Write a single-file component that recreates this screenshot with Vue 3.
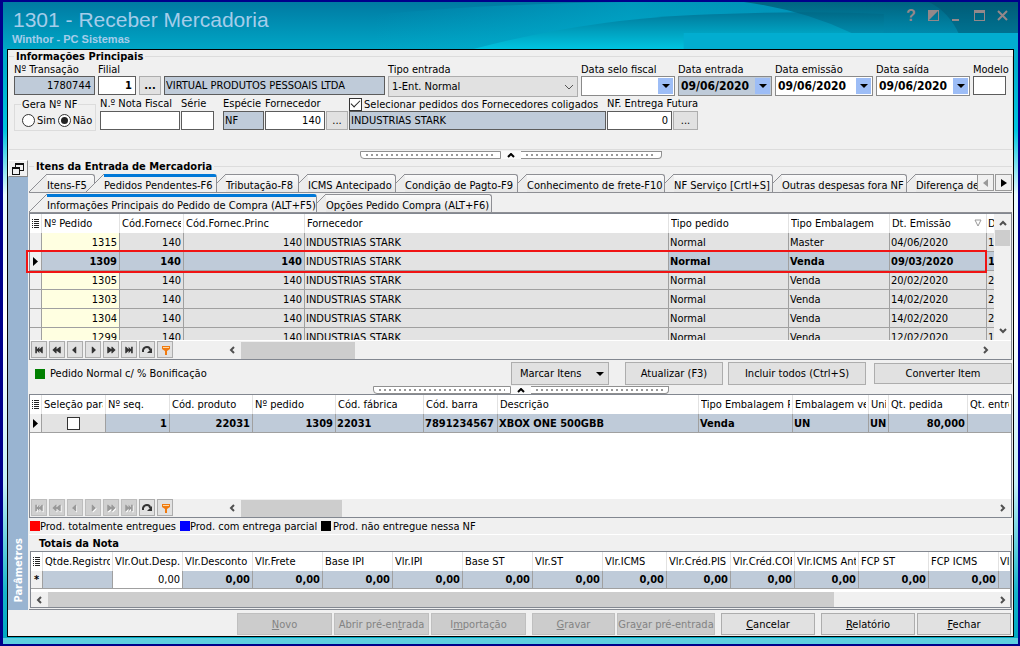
<script setup>
import { ref } from 'vue'

const navGlyphs = [
  { name: 'Primeiro', d: 'M1 2h2v3l3-3v3l3-3h1v8h-1l-3-3v3l-3-3v3h-2z' },
  { name: 'Página anterior', d: 'M5 2v3l4-3h1v8h-1l-4-3v3h-1l-4-4l4-4z' },
  { name: 'Anterior', d: 'M7 2v8h-1l-4-4l4-4z' },
  { name: 'Próximo', d: 'M4 2v8h1l4-4l-4-4z' },
  { name: 'Próxima página', d: 'M6 2v3l-4-3h-1v8h1l4-3v3h1l4-4l-4-4z' },
  { name: 'Último', d: 'M10 2h-2v3l-3-3v3l-3-3h-1v8h1l3-3v3l3-3v3h2z' },
]

const mainTabs = [
  'Itens-F5',
  'Pedidos Pendentes-F6',
  'Tributação-F8',
  'ICMS Antecipado',
  'Condição de Pagto-F9',
  'Conhecimento de frete-F10',
  'NF Serviço [Crtl+S]',
  'Outras despesas fora NF',
  'Diferença de ICMS',
]
const subTabs = ['Informações Principais do Pedido de Compra (ALT+F5)', 'Opções Pedido Compra (ALT+F6)']
const activeMain = ref(1)
const activeSub = ref(0)

const orderColumns = ['Nº Pedido', 'Cód.Fornecedor', 'Cód.Fornec.Princ', 'Fornecedor', 'Tipo pedido', 'Tipo Embalagem']
const orders = [
  { id: '1315', pack: 'Master', date: '04/06/2020', d: '1' },
  { id: '1309', pack: 'Venda', date: '09/03/2020', d: '1', selected: true },
  { id: '1305', pack: 'Venda', date: '20/02/2020', d: '2' },
  { id: '1303', pack: 'Venda', date: '14/02/2020', d: '2' },
  { id: '1304', pack: 'Venda', date: '14/02/2020', d: '2' },
  { id: '1299', pack: 'Venda', date: '12/02/2020', d: '1' },
]

const productColumns = [
  'Seleção para NF', 'Nº seq.', 'Cód. produto', 'Nº pedido', 'Cód. fábrica', 'Cód. barra', 'Descrição',
  'Tipo Embalagem Pedido', 'Embalagem venda', 'Uni', 'Qt. pedida', 'Qt. entregue',
]

const totals = [
  'Vlr.Desconto', 'Vlr.Frete', 'Base IPI', 'Vlr.IPI', 'Base ST', 'Vlr.ST', 'Vlr.ICMS',
  'Vlr.Créd.PIS', 'Vlr.Créd.COFINS', 'Vlr.ICMS Antecip.', 'FCP ST', 'FCP ICMS',
]

const linked = ref(true)
const generate = ref('nao')
const entryType = ref('1-Ent. Normal')
</script>

<template>
  <div class="window">
    <header class="title-bar">
      <svg class="waves" viewBox="0 0 1014 47" preserveAspectRatio="none" aria-hidden="true">
        <defs>
          <linearGradient id="base" x1="0" y1="0" x2="0" y2="1">
            <stop offset="0" stop-color="#007aa2" />
            <stop offset="1" stop-color="#00a6c6" />
          </linearGradient>
          <linearGradient id="glow" x1="0" y1="0" x2="1" y2="0">
            <stop offset="0" stop-color="#00b0d0" stop-opacity="0" />
            <stop offset=".4" stop-color="#00b0d0" stop-opacity=".55" />
            <stop offset="1" stop-color="#0090b8" stop-opacity=".6" />
          </linearGradient>
          <linearGradient id="deep" x1="0" y1="0" x2="0" y2="1">
            <stop offset="0" stop-color="#00789a" />
            <stop offset="1" stop-color="#00c4e0" />
          </linearGradient>
          <linearGradient id="dark" x1="0" y1="0" x2="0" y2="1">
            <stop offset="0" stop-color="#00566f" />
            <stop offset="1" stop-color="#0086a8" />
          </linearGradient>
        </defs>
        <rect width="1014" height="47" fill="url(#base)" />
        <path d="M370 13Q480 2 620 0H1014V47H370z" fill="url(#glow)" />
        <path d="M470 47Q580 18 690 13T880 12V47z" fill="url(#deep)" />
        <path d="M740 0Q800 8 850 32H1014V0z" fill="url(#dark)" opacity=".75" />
        <path d="M925 0Q945 10 955 32H1014V0z" fill="#00506a" opacity=".4" />
        <path d="M680 31H1014V47H680z" fill="#02add0" />
      </svg>
      <div class="titles">
        <h1>1301 - Receber Mercadoria</h1>
        <p>Winthor - PC Sistemas</p>
      </div>
      <div class="window-buttons">
        <button type="button" class="help" aria-label="Ajuda">?</button>
        <button type="button" aria-label="Tema">
          <svg width="12" height="12" viewBox="0 0 12 12"><path d="M0 0h11v11H0zM1 10h9V1z" fill="currentColor" fill-rule="evenodd" /></svg>
        </button>
        <button type="button" aria-label="Minimizar">
          <svg width="12" height="12" viewBox="0 0 12 12"><path d="M1 9h7v2H1z" fill="currentColor" /></svg>
        </button>
        <button type="button" aria-label="Maximizar">
          <svg width="12" height="12" viewBox="0 0 12 12"><path d="M0 0h11v11H0zM1 3v7h9V3z" fill="currentColor" fill-rule="evenodd" /></svg>
        </button>
        <button type="button" aria-label="Fechar janela">
          <svg width="12" height="12" viewBox="0 0 12 12"><path d="M1 1l9 9M10 1L1 10" stroke="currentColor" stroke-width="2" /></svg>
        </button>
      </div>
    </header>

    <main class="client">
      <fieldset class="info">
        <legend>Informações Principais</legend>
        <div class="row first">
          <div class="field"><label for="tr">Nº Transação</label><input id="tr" class="num shade" value="1780744" readonly></div>
          <div class="field"><label for="fi">Filial</label><input id="fi" class="num bold" value="1"></div>
          <div class="field"><button type="button" class="dots bold" aria-label="Buscar filial">...</button></div>
          <div class="field"><input class="shade tight" aria-label="Nome da filial" value="VIRTUAL PRODUTOS PESSOAIS LTDA" readonly></div>
          <div class="field">
            <label for="te">Tipo entrada</label>
            <div class="select">
              <select id="te" v-model="entryType"><option>1-Ent. Normal</option></select>
              <svg width="10" height="6" viewBox="0 0 10 6"><path d="M1 1l4 4l4-4" fill="none" stroke="#555" stroke-width="1" /></svg>
            </div>
          </div>
          <div class="field"><label for="ds">Data selo fiscal</label><div class="date"><input id="ds"><button type="button" aria-label="Abrir calendário"><i /></button></div></div>
          <div class="field"><label for="de">Data entrada</label><div class="date shade"><input id="de" value="09/06/2020"><button type="button" aria-label="Abrir calendário"><i /></button></div></div>
          <div class="field"><label for="dm">Data emissão</label><div class="date"><input id="dm" value="09/06/2020"><button type="button" aria-label="Abrir calendário"><i /></button></div></div>
          <div class="field"><label for="da">Data saída</label><div class="date"><input id="da" value="09/06/2020"><button type="button" aria-label="Abrir calendário"><i /></button></div></div>
          <div class="field"><label for="mo">Modelo</label><input id="mo"></div>
        </div>
        <div class="row second">
          <fieldset class="gera">
            <legend>Gera Nº NF</legend>
            <label><input v-model="generate" type="radio" value="sim">Sim</label>
            <label><input v-model="generate" type="radio" value="nao">Não</label>
          </fieldset>
          <div class="field"><label for="nn">N.º Nota Fiscal</label><input id="nn"></div>
          <div class="field"><label for="se">Série</label><input id="se"></div>
          <div class="field kind"><label for="es">Espécie</label><input id="es" class="shade" value="NF" readonly></div>
          <div class="field"><label for="fo">Fornecedor</label><input id="fo" class="num" value="140"></div>
          <div class="field"><button type="button" class="dots" aria-label="Buscar fornecedor">...</button></div>
          <div class="field">
            <label class="check"><input v-model="linked" type="checkbox">Selecionar pedidos dos Fornecedores coligados</label>
            <input class="shade" aria-label="Nome do fornecedor" value="INDUSTRIAS STARK" readonly>
          </div>
          <div class="field"><label for="nf">NF. Entrega Futura</label><input id="nf" class="num" value="0"></div>
          <div class="field"><button type="button" class="dots" aria-label="Buscar nota">...</button></div>
        </div>
      </fieldset>

      <div class="splitter"><span class="grip left" /><button type="button" aria-label="Recolher"><svg width="8" height="5" viewBox="0 0 8 5"><path d="M1 4l3-3l3 3" fill="none" stroke="#000" stroke-width="2" /></svg></button><span class="grip right" /></div>

      <div class="workspace">
        <aside class="dock">
          <button type="button" aria-label="Restaurar painel">
            <svg width="12" height="12" viewBox="0 0 12 12"><path d="M3 0h9v8H8v4H0V4h3zM4 2v2h4v3h3V2zM1 6v5h6V6z" fill="#111" fill-rule="evenodd" /></svg>
          </button>
          <span>Parâmetros</span>
        </aside>

        <fieldset class="items">
          <legend>Itens da Entrada de Mercadoria</legend>

          <div class="tab-bar">
            <div class="tabs main-tabs" role="tablist">
              <button v-for="(t, i) in mainTabs" :key="t" type="button" role="tab" class="tab" :class="{ active: i === activeMain, lead: i === 0 }" @click="activeMain = i">
                <svg class="slant" width="18" height="20" viewBox="0 0 18 20"><path class="fill" d="M0 19L18 1V20H0z" /><path class="edge" d="M0 19L18 1" /></svg>
                <span>{{ t }}</span>
              </button>
            </div>
            <div class="tab-scroll">
              <button type="button" aria-label="Abas anteriores" disabled><svg width="6" height="8" viewBox="0 0 6 8"><path d="M5 0v8L0 4z" fill="#999" /></svg></button>
              <button type="button" aria-label="Próximas abas"><svg width="6" height="8" viewBox="0 0 6 8"><path d="M0 0v8l6-4z" fill="#000" /></svg></button>
            </div>
          </div>
          <div class="tabs sub-tabs" role="tablist">
            <button v-for="(t, i) in subTabs" :key="t" type="button" role="tab" class="tab" :class="{ active: i === activeSub, lead: i === 0 }" @click="activeSub = i">
              <svg class="slant" width="18" height="20" viewBox="0 0 18 20"><path class="fill" d="M0 19L18 1V20H0z" /><path class="edge" d="M0 19L18 1" /></svg>
              <span>{{ t }}</span>
            </button>
          </div>

          <section class="grid orders">
            <div class="orders-view">
              <div class="rows">
                <table>
                  <colgroup><col class="w12"><col class="w78"><col class="w64"><col class="w121"><col><col class="w120"><col class="w101"><col class="w97"><col class="w7"></colgroup>
                  <thead>
                    <tr>
                      <th class="menu"><svg width="7" height="9" viewBox="0 0 7 9"><path d="M0 0h1v1H0zM2 0h5v1H2zM0 2h1v1H0zM2 2h5v1H2zM0 4h1v1H0zM2 4h5v1H2zM0 6h1v1H0zM2 6h5v1H2zM0 8h1v1H0zM2 8h5v1H2z" fill="#222" /></svg></th>
                      <th v-for="c in orderColumns" :key="c"><span>{{ c }}</span></th>
                      <th class="sorted">Dt. Emissão<svg width="8" height="8" viewBox="0 0 8 8"><path d="M1 1h6L4 7z" fill="none" stroke="#999" /></svg></th>
                      <th class="last"><span>Dt.</span></th>
                    </tr>
                  </thead>
                  <tbody>
                    <tr v-for="o in orders" :key="o.id" :class="{ selected: o.selected }">
                      <td class="mark"><svg v-if="o.selected" width="6" height="9" viewBox="0 0 6 9"><path d="M0 0l5 4.5L0 9z" /></svg></td>
                      <td class="num key">{{ o.id }}</td><td class="num">140</td><td class="num">140</td><td class="plain">INDUSTRIAS STARK</td><td>Normal</td><td>{{ o.pack }}</td><td>{{ o.date }}</td><td>{{ o.d }}</td>
                    </tr>
                  </tbody>
                </table>
              </div>
              <div class="vbar">
                <svg width="8" height="6" viewBox="0 0 8 6"><path d="M1 5l3-3l3 3" fill="none" stroke="#505050" stroke-width="2" /></svg>
                <i />
                <svg width="8" height="6" viewBox="0 0 8 6"><path d="M1 1l3 3l3-3" fill="none" stroke="#505050" stroke-width="2" /></svg>
              </div>
            </div>
            <div class="nav">
              <button v-for="g in navGlyphs" :key="g.name" type="button" :aria-label="g.name"><svg width="10" height="10" viewBox="0 0 11 12"><path :d="g.d" /></svg></button>
              <button type="button" aria-label="Atualizar"><svg width="11" height="12" viewBox="0 0 11 12"><path d="M1 8V6Q2 3 5 3Q8 3 8 6" fill="none" class="stroke" /><path d="M10 4v5H5z" /></svg></button>
              <button type="button" aria-label="Filtrar"><svg width="11" height="12" viewBox="0 0 11 12"><path d="M2 2h8v3L7 7v4H5V7L2 5z" fill="#f07a10" class="own" /><path d="M3 3h6v1H3z" fill="#ffd9a0" class="own" /></svg></button>
              <div class="hbar short">
                <svg width="6" height="8" viewBox="0 0 6 8"><path d="M5 1L2 4l3 3" fill="none" stroke="#505050" stroke-width="2" /></svg><i />
                <svg width="6" height="8" viewBox="0 0 6 8"><path d="M1 1l3 3l-3 3" fill="none" stroke="#505050" stroke-width="2" /></svg>
              </div>
            </div>
            <div class="callout" />
          </section>

          <div class="actions">
            <span class="key-item"><i class="swatch green" />Pedido Normal c/ % Bonificação</span>
            <button type="button" class="btn mark-items">Marcar Itens<i class="down" /></button>
            <button type="button" class="btn refresh">Atualizar (F3)</button>
            <button type="button" class="btn include">Incluir todos (Ctrl+S)</button>
            <button type="button" class="btn convert">Converter Item</button>
          </div>

          <div class="splitter inner"><span class="grip left" /><button type="button" aria-label="Recolher"><svg width="8" height="5" viewBox="0 0 8 5"><path d="M1 4l3-3l3 3" fill="none" stroke="#000" stroke-width="2" /></svg></button><span class="grip right" /></div>

          <section class="grid products">
            <table>
              <colgroup><col class="w12"><col class="w64"><col class="w64"><col class="w83"><col class="w83"><col class="w88"><col class="w74"><col><col class="w94"><col class="w76"><col class="w20"><col class="w79"><col class="w43"></colgroup>
              <thead>
                <tr>
                  <th class="menu"><svg width="7" height="9" viewBox="0 0 7 9"><path d="M0 0h1v1H0zM2 0h5v1H2zM0 2h1v1H0zM2 2h5v1H2zM0 4h1v1H0zM2 4h5v1H2zM0 6h1v1H0zM2 6h5v1H2zM0 8h1v1H0zM2 8h5v1H2z" fill="#222" /></svg></th>
                  <th v-for="c in productColumns" :key="c"><span>{{ c }}</span></th>
                </tr>
              </thead>
              <tbody>
                <tr class="selected">
                  <td class="mark"><svg width="6" height="9" viewBox="0 0 6 9"><path d="M0 0l5 4.5L0 9z" /></svg></td>
                  <td class="plain pick"><input type="checkbox" aria-label="Seleção"></td>
                  <td class="num">1</td><td class="num">22031</td><td class="num">1309</td><td>22031</td><td>7891234567</td><td>XBOX ONE 500GBB</td><td>Venda</td><td>UN</td><td>UN</td><td class="num">80,000</td><td />
                </tr>
              </tbody>
            </table>
            <div class="blank" />
            <div class="nav">
              <button v-for="g in navGlyphs" :key="g.name" type="button" :aria-label="g.name" disabled><svg width="10" height="10" viewBox="0 0 11 12"><path :d="g.d" class="shadow" transform="translate(1 1)" /><path :d="g.d" /></svg></button>
              <button type="button" aria-label="Atualizar"><svg width="11" height="12" viewBox="0 0 11 12"><path d="M1 8V6Q2 3 5 3Q8 3 8 6" fill="none" class="stroke" /><path d="M10 4v5H5z" /></svg></button>
              <button type="button" aria-label="Filtrar"><svg width="11" height="12" viewBox="0 0 11 12"><path d="M2 2h8v3L7 7v4H5V7L2 5z" fill="#f07a10" class="own" /><path d="M3 3h6v1H3z" fill="#ffd9a0" class="own" /></svg></button>
              <div class="hbar mid">
                <svg width="6" height="8" viewBox="0 0 6 8"><path d="M5 1L2 4l3 3" fill="none" stroke="#505050" stroke-width="2" /></svg><i />
                <svg width="6" height="8" viewBox="0 0 6 8"><path d="M1 1l3 3l-3 3" fill="none" stroke="#505050" stroke-width="2" /></svg>
              </div>
            </div>
          </section>

          <div class="key-row">
            <span class="key-item k1"><i class="swatch red" />Prod. totalmente entregues</span>
            <span class="key-item k2"><i class="swatch blue" />Prod. com entrega parcial</span>
            <span class="key-item k3"><i class="swatch black" />Prod. não entregue nessa NF</span>
          </div>

          <section class="totals">
            <h2>Totais da Nota</h2>
            <div class="grid">
              <table>
                <colgroup><col class="w12"><col class="w70"><col class="w70"><col class="w70"><col class="w70"><col class="w70"><col class="w70"><col class="w70"><col class="w70"><col class="w64"><col class="w64"><col class="w64"><col class="w64"><col class="w70"><col class="w70"><col></colgroup>
                <thead>
                  <tr>
                    <th class="menu"><svg width="7" height="9" viewBox="0 0 7 9"><path d="M0 0h1v1H0zM2 0h5v1H2zM0 2h1v1H0zM2 2h5v1H2zM0 4h1v1H0zM2 4h5v1H2zM0 6h1v1H0zM2 6h5v1H2zM0 8h1v1H0zM2 8h5v1H2z" fill="#222" /></svg></th>
                    <th><span>Qtde.Registros</span></th><th><span>Vlr.Out.Desp.</span></th><th v-for="t in totals" :key="t"><span>{{ t }}</span></th><th class="last"><span>Vlr</span></th>
                  </tr>
                </thead>
                <tbody>
                  <tr class="selected">
                    <td class="mark">*</td><td /><td class="num editable">0,00</td><td v-for="t in totals" :key="t" class="num">0,00</td><td />
                  </tr>
                </tbody>
              </table>
              <div class="hbar wide">
                <svg width="6" height="8" viewBox="0 0 6 8"><path d="M5 1L2 4l3 3" fill="none" stroke="#505050" stroke-width="2" /></svg><i />
                <svg width="6" height="8" viewBox="0 0 6 8"><path d="M1 1l3 3l-3 3" fill="none" stroke="#505050" stroke-width="2" /></svg>
              </div>
            </div>
          </section>
        </fieldset>
      </div>

      <footer>
        <button type="button" class="btn" disabled><u>N</u>ovo</button>
        <button type="button" class="btn" disabled>Abrir pré-en<u>t</u>rada</button>
        <button type="button" class="btn" disabled>I<u>m</u>portação</button>
        <button type="button" class="btn save" disabled><u>G</u>ravar</button>
        <button type="button" class="btn presave" disabled>Gra<u>v</u>ar pré-entrada</button>
        <button type="button" class="btn final apart"><u>C</u>ancelar</button>
        <button type="button" class="btn final apart"><u>R</u>elatório</button>
        <button type="button" class="btn final"><u>F</u>echar</button>
      </footer>
    </main>
  </div>
</template>

<style>
body { background: #00008b; }
</style>

<style scoped>
* { box-sizing: border-box; }
.window {
  display: flex; flex-direction: column; min-height: 100vh;
  border: 2px solid #00008b; border-left-width: 3px;
  background: linear-gradient(#00aecb 10%, #00c5df 20%, #e8fbfd 30%, #fff 50%, #c5f0f6 75%, #16b4ca 92%, #00a9c2 99%, #5ecfdf 99%);
  font: 11px/13px "DejaVu Sans Condensed", "DejaVu Sans", sans-serif; color: #000;
}
button, input, select { font: inherit; color: inherit; margin: 0; border-radius: 0; }
button { padding: 0; white-space: nowrap; }
button svg { display: block; }
fieldset { margin: 0; padding: 0; border: 0; min-width: 0; }
legend, h2 { font-weight: bold; font-size: 11px; margin: 0; }

.title-bar { position: relative; display: flex; justify-content: space-between; height: 47px; flex: none; }
.waves { position: absolute; inset: 0; width: 100%; height: 100%; }
.titles { position: relative; padding: 6px 9px; font-family: "Liberation Sans", Arial, sans-serif; color: #a5cdea; }
.titles h1 { margin: 0 1px; font-size: 21px; line-height: 24px; font-weight: normal; }
.titles p { margin: 1px 0; font-size: 11px; line-height: 13px; font-weight: bold; }
.window-buttons { position: relative; display: flex; align-items: flex-start; gap: 11px; padding: 8px 9px; color: #93888a; }
.window-buttons button { width: 12px; height: 12px; border: 0; background: none; }
.window-buttons .help { font: bold 16px/12px "Liberation Sans", Arial, sans-serif; }

.client { flex: 1; display: flex; flex-direction: column; margin: 0 4px 7px; border: 1px solid #000; background: #f0f0f0; }
.info { flex: none; height: 100px; margin: 0 0 0 1px; border: 1px solid #dcdcdc; border-left: 0; }
.info > legend { margin-left: 5px; padding: 0 2px; line-height: 13px; }
.row { display: grid; padding: 0 6px 0 5px; }
.first { grid-template-columns: 81px 38px 22px minmax(0, 1fr) 190px 94px 94px 98px 94px 33px; gap: 3px; }
.second { grid-template-columns: 85px 80px 33px 49px 60px 22px 257px 65px 25px; gap: 1px; margin-top: -1px; }
.field { display: flex; flex-direction: column; justify-content: flex-end; min-width: 0; height: 33px; }
.first .field { justify-content: flex-start; height: 34px; }
.second .field { height: 34px; }
.field > label { height: 13px; white-space: nowrap; }
.second .field > label { height: 14px; }
.first .field > input:first-child, .first .field > button:first-child { margin-top: 13px; }
.field input, .date { width: 100%; height: 19px; border: 1px solid #5c5c5c; background: #fff; padding: 0 3px; outline: 0; }
.field .num, .num { text-align: right; }
.bold { font-weight: bold; }
.field input.shade, .date.shade { background: #bfcbd9; }
.second .field input.shade, .field input.tight { padding: 0 1px; }
.dots { height: 19px; border: 1px solid #adadad; background: #e1e1e1; line-height: 15px; }
.kind { margin-left: 8px; }
.select { position: relative; height: 21px; }
.select select { width: 100%; height: 21px; padding: 0 3px; appearance: none; border: 1px solid #adadad; background: #e1e1e1; }
.select svg { position: absolute; right: 4px; top: 8px; }
.date { display: flex; height: 20px; padding: 1px; border-color: #8a8a8a; }
.field .date input { flex: 1; min-width: 0; height: 16px; border: 0; padding: 0 1px; background: none; font-size: 12px; font-weight: bold; }
.date button { width: 15px; height: 16px; border: 0; background: #9dbdf6; display: grid; place-items: center; }
.date i, .down { border: 4px solid transparent; border-top-color: #000; border-bottom: 0; }
.gera { display: flex; gap: 2px; width: 82px; height: 33px; margin-top: 2px; border: 1px solid #dcdcdc; padding: 3px 0 0 7px; }
.gera legend { font-weight: normal; padding: 0 1px; margin-left: -1px; }
.gera label { display: flex; align-items: center; gap: 2px; height: 13px; }
input[type="radio"], .field input[type="checkbox"], .pick input {
  appearance: none; width: 13px; height: 13px; flex: none; margin: 0; padding: 0; border: 1px solid #333; background: #fff; display: grid; place-items: center;
}
input[type="radio"] { border-radius: 50%; }
input[type="radio"]:checked::after { content: ""; width: 7px; height: 7px; border-radius: 50%; background: #222; }
.check { display: flex; align-items: center; gap: 2px; }
.check input:checked::after { content: ""; width: 8px; height: 4px; margin-bottom: 3px; border: solid #222; border-width: 0 0 1px 1px; transform: rotate(-45deg); }

.splitter { display: flex; flex: none; align-self: center; width: 302px; height: 9px; margin: 0 0 1px; padding-top: 1px; }
.splitter button { width: 20px; height: 8px; border: 0; background: #fafafa; display: grid; place-items: center; }
.grip { flex: 1; height: 8px; border: 1px solid #909090; background: repeating-linear-gradient(90deg, #999 0 2px, transparent 2px 5px) center / calc(100% - 10px) 2px no-repeat, #fff; }
.grip.left { border-radius: 0 0 0 4px; }
.grip.right { border-radius: 0 0 4px 0; border-left: 0; }
.inner { width: 296px; height: 8px; margin: 0; padding: 0; }

.workspace { flex: 1; display: flex; }
.dock { width: 20px; flex: none; display: flex; flex-direction: column; justify-content: space-between; align-items: center; background: #99b4d1; color: #fff; font-weight: bold; }
.dock button { width: 20px; height: 17px; border: 1px solid #888; border-top-color: #fff; border-left-color: #fff; background: #f0f0f0; display: grid; place-items: center; }
.dock span { writing-mode: vertical-rl; transform: rotate(180deg); padding-top: 7px; }
.items { flex: 1; display: flex; flex-direction: column; margin: 0 1px; border-top: 1px solid #dcdcdc; }
.items > legend { margin-left: 5px; padding: 0 2px; }

.tab-bar { display: flex; flex: none; height: 20px; }
.tabs { display: grid; flex: 1; min-width: 0; height: 20px; overflow: hidden; border-bottom: 1px solid #8e8f94; }
.main-tabs { grid-template-columns: 66px 122px 82px 97px 122px 147px 108px 134px 90px; }
.sub-tabs { flex: none; grid-template-columns: 288px 175px; }
.tab { position: relative; display: flex; height: 19px; border: 0; background: none; overflow: hidden; margin-left: 0; }
.tab .slant { flex: none; margin-left: -9px; }
.tab.lead .slant { margin-left: 0; }
.tab.active { margin-left: -9px; z-index: 1; overflow: visible; }
.tab.lead.active { margin-left: 0; }
.tab.active .slant { margin-left: 0; }
.fill { fill: #ececec; }
.edge { fill: none; stroke: #8e8f94; }
.tab span { flex: 1; min-width: 0; height: 19px; margin-top: 1px; padding: 4px 0 0; border-top: 1px solid #8e8f94; border-right: 1px solid #8e8f94; border-top-right-radius: 3px; background: linear-gradient(#fafafa, #e4e4e4); text-align: left; line-height: 13px; }
.tab.active span { border-top: 3px solid #0078d7; padding-top: 2px; background: #f0f0f0; }
.tab.active .fill { fill: #f0f0f0; }
.tab-scroll { display: flex; width: 35px; gap: 1px; border-bottom: 1px solid #8e8f94; }
.tab-scroll button { width: 17px; height: 17px; margin-top: 1px; border: 1px solid #999; background: #f0f0f0; display: grid; place-items: center; }

.grid { position: relative; border: 1px solid #828790; background: #fff; }
table { width: 100%; table-layout: fixed; border-collapse: separate; border-spacing: 0; }
th, td { height: 19px; padding: 0 2px 0 1px; overflow: hidden; white-space: nowrap; text-align: left; line-height: 13px; border-right: 1px solid #a0a0a0; border-bottom: 1px solid #a0a0a0; }
th { font-weight: normal; padding: 0 2px; border-right-color: #e2e2e2; border-bottom: 0; background: #fff; }
th span { display: block; overflow: hidden; }
th.last { padding: 0 0 0 1px; }
tr > :last-child { border-right: 0; }
td { background: #e3e3e3; }
td.key { background: #ffffe1; }
.selected td { background: #bfcbd9; font-weight: bold; }
.selected td.plain { background: #e3e3e3; font-weight: normal; }
td.mark, .selected td.mark { background: #f0f0f0; padding: 0; text-align: center; }
.mark svg, .menu svg { display: block; margin: auto; }
th.menu { padding: 0; }
.sorted svg { float: right; margin: 2px 2px 0 0; }
.w7 { width: 7px; } .w12 { width: 12px; } .w20 { width: 20px; } .w43 { width: 43px; } .w64 { width: 64px; } .w70 { width: 70px; }
.w74 { width: 74px; } .w76 { width: 76px; } .w78 { width: 78px; } .w79 { width: 79px; } .w83 { width: 83px; } .w88 { width: 88px; }
.w94 { width: 94px; } .w97 { width: 97px; } .w101 { width: 101px; } .w120 { width: 120px; } .w121 { width: 121px; }

.orders { flex: none; }
.orders-view { display: flex; height: 127px; border-bottom: 1px solid #fff; }
.rows { flex: 1; min-width: 0; overflow: hidden; }
.vbar { width: 17px; display: flex; flex-direction: column; align-items: center; background: #f0f0f0; padding: 6px 0; }
.vbar i { width: 15px; height: 16px; margin: 4px 0 auto; background: #cdcdcd; }
.nav { display: flex; gap: 2px; height: 18px; flex: none; padding: 0 0 0 1px; background: #f0f0f0; }
.nav > button { width: 16px; height: 17px; border: 1px solid #adadad; background: #e1e1e1; display: grid; place-items: center; }
.nav path:not(.own) { fill: #333; }
.nav path.stroke { fill: none; stroke: #333; stroke-width: 2; }
.nav > button:disabled { background: #d0d0d0; border-color: #bdbdbd; }
.nav > button:disabled path { fill: #999; }
.nav > button:disabled path.shadow { fill: #fff; }
.hbar { flex: 1; display: flex; align-items: center; background: #f0f0f0; }
.nav .hbar path { fill: none; }
.hbar i { height: 17px; margin: 0 auto 0 6px; background: #cdcdcd; }
.nav .hbar { margin-left: 54px; padding-right: 22px; }
.nav .hbar.mid { padding-right: 5px; }
.short i { width: 15%; }
.mid i { width: 13%; }
.callout { position: absolute; left: -4px; right: 24px; top: 36px; height: 23px; border: 2px solid #f01414; }

.actions { display: flex; align-items: flex-start; flex: none; height: 26px; padding: 2px 0 0 6px; }
.key-item { display: flex; align-items: center; white-space: nowrap; }
.actions .key-item { flex: 1; gap: 5px; height: 23px; }
.swatch { width: 10px; height: 10px; flex: none; }
.green { background: #008000; } .red { background: #f00; } .blue { background: #00f; } .black { background: #000; }
.btn { height: 23px; border: 1px solid #adadad; background: #e1e1e1; overflow: hidden; }
.btn:disabled { background: #ccc; border-color: #bfbfbf; color: #838383; }
.mark-items { display: flex; align-items: center; justify-content: space-between; width: 98px; padding: 0 4px 0 8px; margin-right: 16px; }
.refresh { width: 98px; margin-right: 5px; }
.include { width: 138px; margin-right: 8px; }
.convert { width: 138px; height: 21px; margin-top: 1px; }

.products { flex: 1; display: flex; flex-direction: column; }
.blank { flex: 1; }
.pick input { margin: auto; }
.key-row { display: flex; flex: none; height: 17px; align-items: center; padding-left: 1px; border-bottom: 1px solid #fff; }
.k1 { width: 150px; } .k2 { width: 141px; } .k3 { gap: 2px; }
.totals { flex: none; border: solid #828790; border-width: 0 1px 1px 0; padding: 2px 0 1px 1px; }
.totals h2 { height: 14px; padding-left: 9px; }
.totals tbody td { height: 18px; }
.totals td.editable { background: #fff; font-weight: normal; }
.wide { margin-top: 3px; padding: 0 4px 0 5px; }
.wide i { width: 81%; height: 15px; }

footer { display: flex; flex: none; justify-content: flex-end; gap: 2px; padding: 3px 2px 1px; }
footer .btn { width: 95px; height: 22px; }
footer .save { width: 83px; margin-left: 4px; }
footer .presave { width: 98px; }
footer .final { width: 94px; }
footer .apart { margin-left: 4px; }
</style>
